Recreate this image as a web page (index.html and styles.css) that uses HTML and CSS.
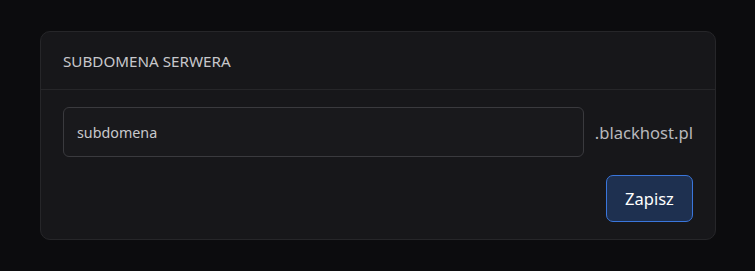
FILE: index.html
```html
<!DOCTYPE html>
<html lang="pl">
<head>
<meta charset="utf-8">
<link rel="stylesheet" href="styles.css">
</head>
<body>
<div class="card">
  <div class="card-header">SUBDOMENA SERWERA</div>
  <div class="card-body">
    <div class="row">
      <input class="field" type="text" value="subdomena">
      <span class="suffix">.blackhost.pl</span>
    </div>
    <div class="actions">
      <button class="btn">Zapisz</button>
    </div>
  </div>
</div>
</body>
</html>
```

FILE: styles.css
```css
html, body {
  margin: 0;
  background: #0c0c0e;
}
body {
  padding: 31px 39px 31px 40px;
  font-family: "Noto Sans", "Open Sans", sans-serif;
  color: #d4d4d8;
}
.card {
  background: #17171a;
  border: 1px solid #262629;
  border-radius: 10px;
}
.card-header {
  height: 57px;
  display: flex;
  align-items: center;
  padding: 0 22px;
  border-bottom: 1px solid #262629;
  font-size: 15.2px;
  color: #c8c8cc;
}
.card-body {
  padding: 17px 22px 17px;
}
.row {
  display: flex;
  align-items: center;
  gap: 11px;
  height: 50px;
}
.field {
  flex: 1;
  height: 50px;
  box-sizing: border-box;
  background: #19191c;
  border: 1px solid #3a3a3e;
  border-radius: 6px;
  padding: 0 13px;
  font-family: inherit;
  font-size: 14.3px;
  color: #c8c8cc;
  outline: none;
}
.suffix {
  font-size: 16.6px;
  color: #b8b8bc;
}
.actions {
  display: flex;
  justify-content: flex-end;
  margin-top: 18px;
}
.btn {
  height: 47px;
  width: 87px;
  background: #1e3050;
  border: 1px solid #3a76dc;
  border-radius: 7px;
  color: #ffffff;
  font-family: inherit;
  font-size: 16.5px;
  padding: 0;
}
```
